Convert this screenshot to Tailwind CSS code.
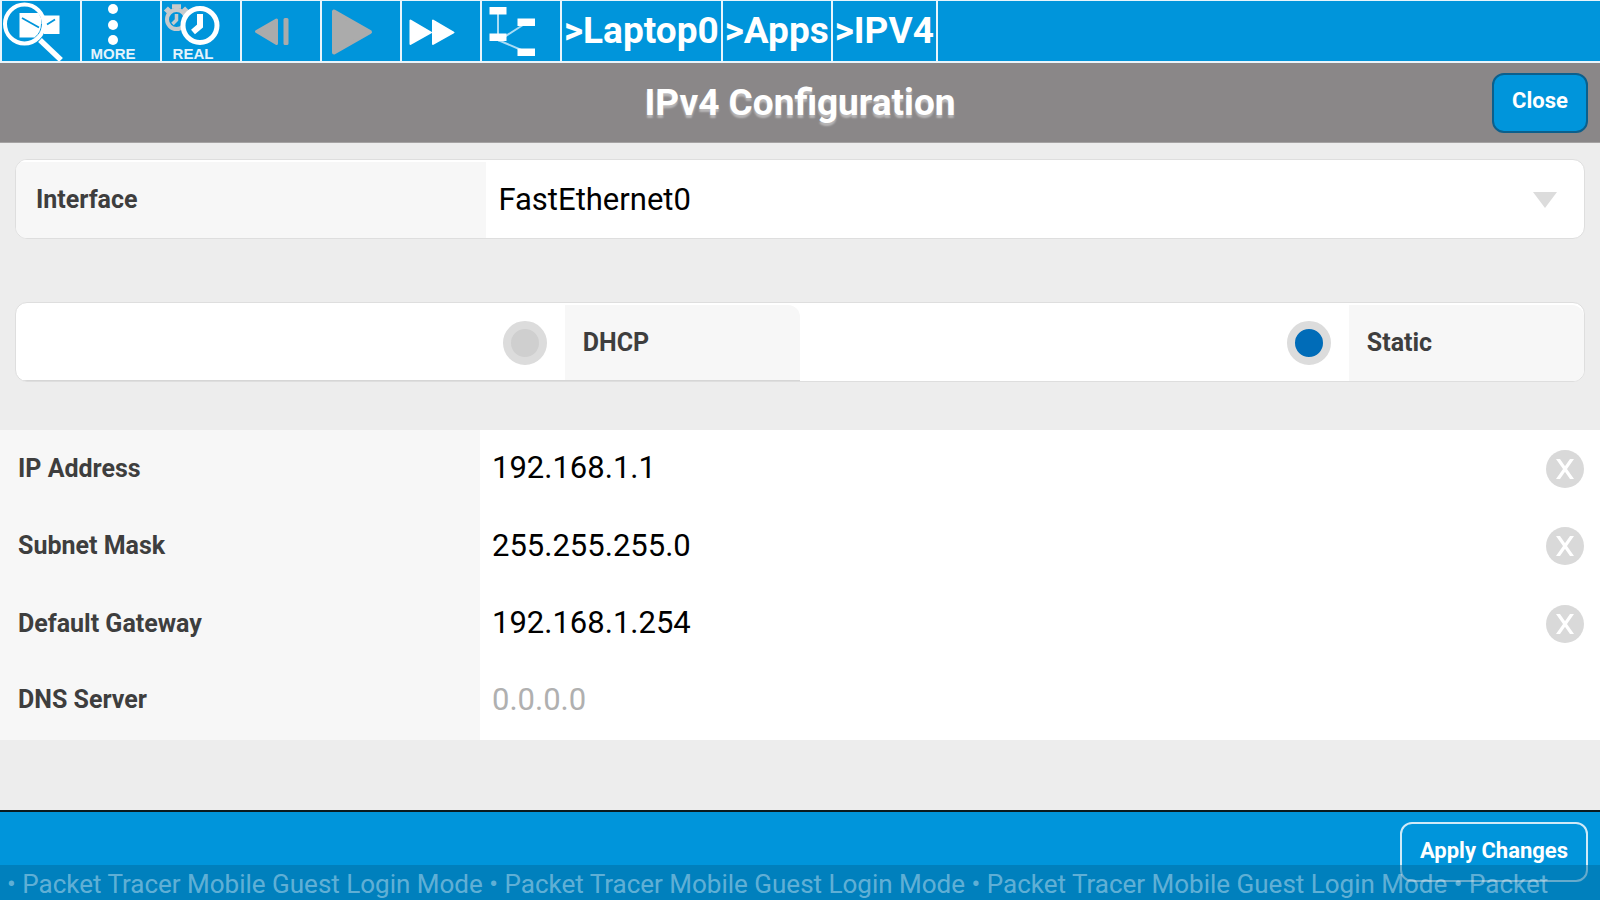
<!DOCTYPE html>
<html lang="en">
<head>
<meta charset="utf-8">
<meta name="viewport" content="width=device-width, initial-scale=1">
<title>IPv4 Configuration</title>
<script src="https://cdn.jsdelivr.net/npm/@tailwindcss/browser@4"></script>
</head>
<body class="min-h-screen flex flex-col bg-[#ededed] font-[Roboto,sans-serif] text-black overflow-x-hidden">

<nav aria-label="Toolbar" class="flex h-[63px] bg-[#0095db] border-b-2 border-t border-[#e8f5fc] text-white">
  <button type="button" aria-label="Inspect" class="w-20 border-l-2 border-[#e8f5fc]">
    <svg class="block w-full h-full" viewBox="0 0 78 60">
      <path d="M17.500 12h19l3 6v11l-4 7.500h-18z" fill="#fff"/>
      <path d="M42 14.500h15.500v18.500H42z" fill="#fff"/>
      <path d="M20 17l17 9.500M45 23.500l8-5" stroke="#0095db" stroke-width="1.800" fill="none"/>
      <path d="M39.500 23q0 8-6 13" stroke="#0095db" stroke-width="1" fill="none"/>
      <circle cx="22.500" cy="23" r="19.500" fill="none" stroke="#fff" stroke-width="4"/>
      <path d="M40 41l17 16" stroke="#fff" stroke-width="5.500" stroke-linecap="square"/>
    </svg>
  </button>
  <button type="button" class="w-20 border-l-2 border-[#e8f5fc]">
    <svg class="block w-full h-full overflow-visible" viewBox="0 0 78 60" font-family="Liberation Sans, sans-serif">
      <circle cx="31" cy="8" r="5" fill="#fff"/><circle cx="31" cy="24" r="5" fill="#fff"/><circle cx="31" cy="39" r="5" fill="#fff"/>
      <text x="31" y="58" text-anchor="middle" font-size="15" font-weight="700" fill="#e3f3fc">MORE</text>
    </svg>
  </button>
  <button type="button" class="w-20 border-l-2 border-[#e8f5fc]">
    <svg class="block w-full h-full overflow-visible" viewBox="0 0 78 60" font-family="Liberation Sans, sans-serif">
      <g fill="none" stroke="#c6cacc">
        <circle cx="14.500" cy="18.500" r="9.500" stroke-width="4"/>
        <path d="M14.500 13v6l-4 4" stroke-width="3.500"/>
        <path d="M10 5.500h9M14.500 4v6M3.500 11l4-4M21.500 7l4 4" stroke-width="4.500"/>
      </g>
      <circle cx="38" cy="24.500" r="17" fill="#0095db" stroke="#fff" stroke-width="5"/>
      <path d="M38 13v12l-7 6" fill="none" stroke="#fff" stroke-width="6"/>
      <text x="31" y="58" text-anchor="middle" font-size="15" font-weight="700" fill="#e3f3fc">REAL</text>
    </svg>
  </button>
  <button type="button" aria-label="Step back" class="w-20 border-l-2 border-[#e8f5fc]">
    <svg class="block w-full h-full" viewBox="0 0 78 60" fill="#ababab" stroke="#ababab" stroke-width="3" stroke-linejoin="round">
      <path d="M14.500 30.500L34.500 19v23.500zM43 18.500h2v24h-2z"/>
    </svg>
  </button>
  <button type="button" aria-label="Play" class="w-20 border-l-2 border-[#e8f5fc]">
    <svg class="block w-full h-full" viewBox="0 0 78 60" fill="#ababab" stroke="#ababab" stroke-width="4" stroke-linejoin="round">
      <path d="M12 10.500v41L48 31z"/>
    </svg>
  </button>
  <button type="button" aria-label="Fast forward" class="w-20 border-l-2 border-[#e8f5fc]">
    <svg class="block w-full h-full" viewBox="0 0 78 60" fill="#fff" stroke="#fff" stroke-width="2" stroke-linejoin="round">
      <path d="M8.500 19.500v23.500L29 31.500zM31 19.500v23.500L51.500 31.500z"/>
    </svg>
  </button>
  <button type="button" aria-label="Topology" class="w-20 border-l-2 border-[#e8f5fc]">
    <svg class="block w-full h-full" viewBox="0 0 78 60">
      <path d="M16 10v26M16 40l28-18M16 39l28 12" stroke="#a9dcf5" stroke-width="2" fill="none"/>
      <path d="M7.500 6h17v7.500h-17zM35.500 17.500h17.500v7.500H35.500zM7.500 32.500h17v7.500h-17zM35.500 47.500h17.500v7.500H35.500z" fill="#fff"/>
    </svg>
  </button>
  <div class="flex text-[37px]/[60px] font-bold">
    <a href="#laptop0" class="border-l-2 border-[#e8f5fc] px-[2px]">&gt;Laptop0</a>
    <a href="#apps" class="border-l-2 border-[#e8f5fc] px-[2px]">&gt;Apps</a>
    <a href="#ipv4" class="border-x-2 border-[#e8f5fc] px-[2px]">&gt;IPV4</a>
  </div>
</nav>

<header class="grid grid-cols-[1fr_auto_1fr] items-center h-20 px-3 bg-[#8a8788] border-b border-[#a5a3a3]">
  <h1 class="col-start-2 text-[37px] font-bold text-white [text-shadow:0_3px_2px_rgba(255,255,255,0.4)]">IPv4 Configuration</h1>
  <button type="button" class="justify-self-end w-24 h-15 rounded-xl border-2 border-[#0b5f8c] bg-[#0095db] text-[22px] font-bold text-white pb-1">Close</button>
</header>

<main class="flex-1">
  <form id="ipv4-form">
    <div class="mx-[15px] mt-4 h-20 flex rounded-xl border border-[#dedede] bg-white overflow-hidden">
      <label for="iface" class="w-[30%] h-full flex items-center pl-5 bg-[#f7f7f7] border-t-2 border-white text-[25px] font-bold text-[#3e3e3e]">Interface</label>
      <div class="relative flex-1">
        <select id="iface" class="w-full h-full appearance-none pl-3 pt-[2px] text-[31px] bg-transparent">
          <option>FastEthernet0</option>
        </select>
        <svg class="absolute right-[27px] top-8 w-6 h-4 pointer-events-none" viewBox="0 0 24 16"><path d="M0 0h24L12 16z" fill="#dcdcdc"/></svg>
      </div>
    </div>

    <div role="radiogroup" aria-label="Addressing" class="mx-[15px] mt-[63px] h-20 grid grid-cols-2 rounded-xl border border-[#dedede] bg-white overflow-hidden">
      <div class="flex items-stretch pt-[2px] border-b border-[#d6d6d6]">
        <div class="w-[70%] flex items-center justify-end pr-[18px]">
          <input id="dhcp" type="radio" name="mode" class="appearance-none size-11 rounded-full border-[8px] border-[#dcdcdc] bg-[#cfcfcf] checked:bg-[#006cb8]">
        </div>
        <label for="dhcp" class="flex-1 flex items-center pl-[18px] rounded-tr-xl bg-[#f7f7f7] text-[25px] font-bold text-[#3e3e3e]">DHCP</label>
      </div>
      <div class="flex items-stretch pt-[2px]">
        <div class="w-[70%] flex items-center justify-end pr-[18px]">
          <input id="static" type="radio" name="mode" checked class="appearance-none size-11 rounded-full border-[8px] border-[#dcdcdc] bg-[#cfcfcf] checked:bg-[#006cb8]">
        </div>
        <label for="static" class="flex-1 flex items-center pl-[18px] rounded-tr-xl bg-[#f7f7f7] text-[25px] font-bold text-[#3e3e3e]">Static</label>
      </div>
    </div>

    <div class="mt-12 bg-white">
      <div class="flex h-[77px]">
        <label for="ip" class="w-[30%] flex items-center pl-[18px] bg-[#f7f7f7] text-[25px] font-bold text-[#3e3e3e]">IP Address</label>
        <input id="ip" type="text" value="192.168.1.1" class="flex-1 min-w-0 pl-3 text-[31px]">
        <button type="button" aria-label="Clear IP Address" class="self-center mr-4 size-[38px] rounded-full bg-[#d9d9d9]">
          <svg class="size-full" viewBox="0 0 38 38"><path d="M10 9h4L28 29h-4zM24 9h4L14 29h-4z" fill="#fff"/></svg>
        </button>
      </div>
      <div class="flex h-[78px]">
        <label for="mask" class="w-[30%] flex items-center pl-[18px] bg-[#f7f7f7] text-[25px] font-bold text-[#3e3e3e]">Subnet Mask</label>
        <input id="mask" type="text" value="255.255.255.0" class="flex-1 min-w-0 pl-3 text-[31px]">
        <button type="button" aria-label="Clear Subnet Mask" class="self-center mr-4 size-[38px] rounded-full bg-[#d9d9d9]">
          <svg class="size-full" viewBox="0 0 38 38"><path d="M10 9h4L28 29h-4zM24 9h4L14 29h-4z" fill="#fff"/></svg>
        </button>
      </div>
      <div class="flex h-[77px]">
        <label for="gateway" class="w-[30%] flex items-center pl-[18px] bg-[#f7f7f7] text-[25px] font-bold text-[#3e3e3e]">Default Gateway</label>
        <input id="gateway" type="text" value="192.168.1.254" class="flex-1 min-w-0 pl-3 text-[31px]">
        <button type="button" aria-label="Clear Default Gateway" class="self-center mr-4 size-[38px] rounded-full bg-[#d9d9d9]">
          <svg class="size-full" viewBox="0 0 38 38"><path d="M10 9h4L28 29h-4zM24 9h4L14 29h-4z" fill="#fff"/></svg>
        </button>
      </div>
      <div class="flex h-[78px]">
        <label for="dns" class="w-[30%] flex items-center pl-[18px] pb-[2px] bg-[#f7f7f7] text-[25px] font-bold text-[#3e3e3e]">DNS Server</label>
        <input id="dns" type="text" placeholder="0.0.0.0" class="flex-1 min-w-0 pl-3 pb-[2px] text-[31px] placeholder:text-[#b0b0b0]">
      </div>
    </div>
  </form>
</main>

<footer class="relative flex justify-end items-start h-[90px] border-t-2 border-[#0a1a1f] bg-[#0095db] pt-[10px] pr-3">
  <button type="submit" form="ipv4-form" class="h-15 px-[18px] rounded-xl border-2 border-[#cfeaf8] text-[22px] font-bold text-white pb-1">Apply Changes</button>
  <p class="absolute inset-x-0 bottom-0 h-[35px] pl-[7px] bg-[#006ca0]/50 text-[26px]/[38px] text-white/40 whitespace-nowrap overflow-hidden pointer-events-none">• Packet Tracer Mobile Guest Login Mode • Packet Tracer Mobile Guest Login Mode • Packet Tracer Mobile Guest Login Mode • Packet</p>
</footer>

</body>
</html>
